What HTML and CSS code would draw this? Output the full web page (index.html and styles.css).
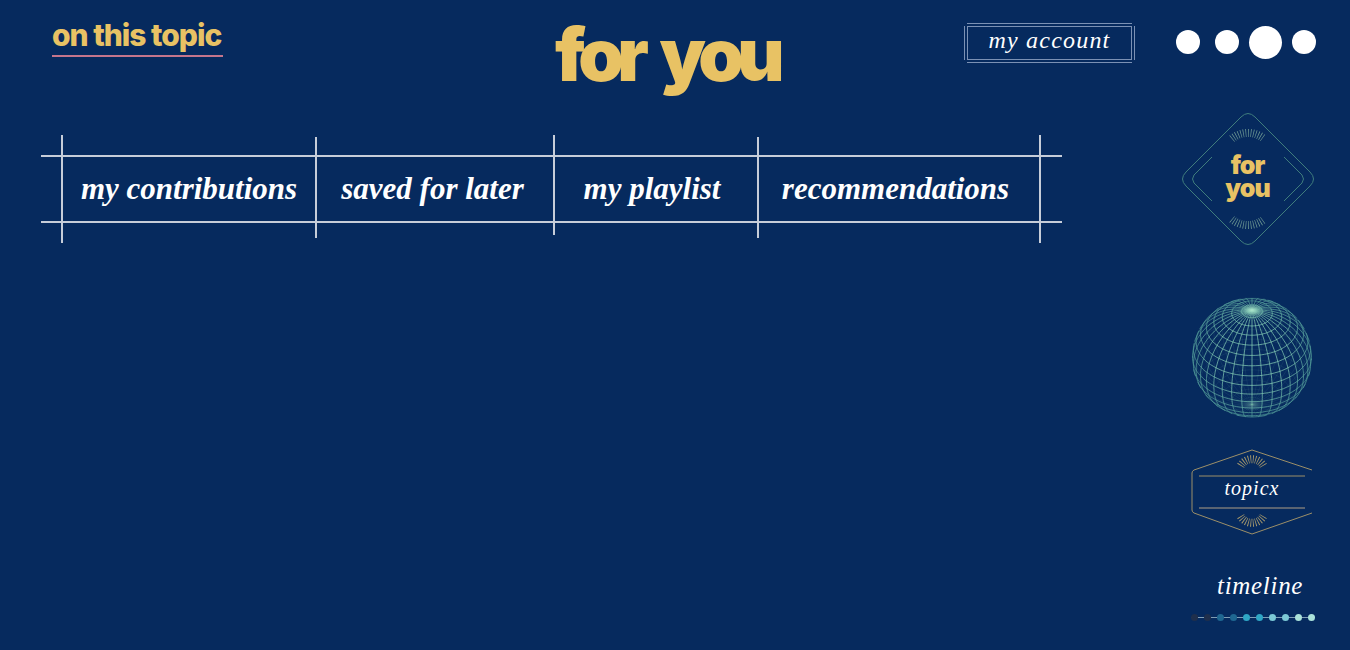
FILE: index.html
```html
<!DOCTYPE html>
<html lang="en">
  <head>
    <meta charset="UTF-8" />
    <title>for you</title>
    <link rel="stylesheet" href="styles.css">
  </head>
  <body>
    <header class="topbar">
      <h2 class="topic-title">on this topic</h2>
      <h1 class="page-title">for you</h1>
      <a href="#" class="account">my account</a>
      <div class="dots">
        <span class="dot"></span>
        <span class="dot"></span>
        <span class="dot dot-big"></span>
        <span class="dot"></span>
      </div>
    </header>

    <div class="content">
      <nav class="tabs">
        <a href="#" class="tab tab-long">my contributions</a>
        <a href="#" class="tab tab-mid">saved for later</a>
        <a href="#" class="tab tab-short">my playlist</a>
        <a href="#" class="tab tab-mid tab-last">recommendations</a>
      </nav>

      <aside class="side">
        <svg class="badge-foryou" width="132" height="132" viewBox="0 0 132 132">
          <path class="teal-line" d="M59 4 L4 59 Q-3 66 4 73 L59 128 Q66 135 73 128 L128 73 Q135 66 128 59 L73 4 Q66 -3 59 4 Z" />
          <path class="teal-line" d="M30 44 L12 62 Q9 66 12 70 L30 88 M102 44 L120 62 Q123 66 120 70 L102 88" />
          <path class="teal-rays" d="M49.9 25.8 A25 25 0 0 1 82.1 25.8" />
          <path class="teal-rays" d="M49.9 106.2 A25 25 0 0 0 82.1 106.2" />
          <text class="badge-word" x="65.5" y="61">for</text>
          <text class="badge-word" x="65.5" y="84">you</text>
        </svg>

        <svg id="globe" class="globe" width="120" height="122" viewBox="0 0 120 122"></svg>

        <svg class="badge-topic" width="122" height="86" viewBox="0 0 122 86">
          <path class="gold-line" d="M61 1 L3 21 Q1 22 1 24 L1 61 Q1 63 3 64 L61 85 L121 64 M121 21 L61 1" />
          <path class="gold-line" d="M8 27 H114" />
          <path class="grey-line" d="M8 59 H114" />
          <path class="gold-rays" d="M49.7 16.7 A13 13 0 0 1 72.3 16.7" />
          <path class="gold-rays" d="M49.7 67.3 A13 13 0 0 0 72.3 67.3" />
          <text class="badge-label" x="61" y="46">topicx</text>
        </svg>

        <div class="timeline">
          <div class="timeline-label">timeline</div>
          <div class="timeline-dots">
            <span class="tl-dot tl-1"></span>
            <span class="tl-dot tl-1"></span>
            <span class="tl-dot tl-2"></span>
            <span class="tl-dot tl-2"></span>
            <span class="tl-dot tl-3"></span>
            <span class="tl-dot tl-3"></span>
            <span class="tl-dot tl-4"></span>
            <span class="tl-dot tl-4"></span>
            <span class="tl-dot tl-5"></span>
            <span class="tl-dot tl-5"></span>
          </div>
        </div>
      </aside>
    </div>

    <script src="globe.js"></script>
  </body>
</html>
```

FILE: styles.css
```css
body {
  margin: 0;
  height: 650px;
  overflow: hidden;
  background-color: #062a5e;
  color: #fff;
  font-family: "Liberation Serif", serif;
}

.topbar {
  display: flex;
  height: 100px;
}

.topic-title {
  position: relative;
  box-sizing: border-box;
  width: 171px;
  height: 57px;
  margin: 0 0 0 52px;
  padding-top: 16px;
  border-bottom: 2px solid #c4758c;
  font-family: Inter, sans-serif;
  font-size: 30px;
  font-weight: 800;
  line-height: 38px;
  letter-spacing: -1px;
  white-space: nowrap;
  color: #e8c264;
}

.page-title {
  width: 226px;
  margin: 0 0 0 332px;
  padding-top: 12px;
  font-family: Inter, sans-serif;
  font-size: 73px;
  font-weight: 900;
  line-height: 86px;
  letter-spacing: -6.5px;
  word-spacing: 9px;
  white-space: nowrap;
  color: #e8c264;
}

.account {
  position: relative;
  box-sizing: border-box;
  width: 171px;
  height: 40px;
  margin: 23px 0 0 183px;
  font-size: 24px;
  font-style: italic;
  line-height: 35px;
  letter-spacing: 1.2px;
  text-align: center;
  text-decoration: none;
  color: #fff;
}

.account::before {
  content: "";
  position: absolute;
  top: 0;
  bottom: 0;
  left: 3px;
  right: 3px;
  border-top: 4px double #7b91b4;
  border-bottom: 4px double #7b91b4;
}

.account::after {
  content: "";
  position: absolute;
  top: 3px;
  bottom: 3px;
  left: 0;
  right: 0;
  border-left: 4px double #7b91b4;
  border-right: 4px double #7b91b4;
}

.dots {
  display: flex;
  align-items: center;
  gap: 10px;
  height: 34px;
  margin: 25px 0 0 41px;
}

.dot {
  width: 24px;
  height: 24px;
  margin-right: 5px;
  border-radius: 50%;
  background-color: #fff;
}

.dot-big {
  width: 33px;
  height: 33px;
  margin-left: -5px;
  margin-right: 0;
}

.content {
  display: flex;
}

.tabs {
  display: flex;
  box-sizing: border-box;
  width: 1021px;
  height: 68px;
  margin: 55px 0 0 41px;
  padding: 0 20px;
  border-top: 2px solid #c6cdd9;
  border-bottom: 2px solid #c6cdd9;
}

.tab {
  position: relative;
  display: flex;
  box-sizing: border-box;
  align-items: center;
  justify-content: center;
  font-size: 31px;
  font-weight: bold;
  font-style: italic;
  text-decoration: none;
  color: #fff;
}

.tab::before {
  content: "";
  position: absolute;
  left: 0;
  width: 2px;
  background-color: #c6cdd9;
}

.tab-long {
  width: 254px;
  padding-left: 2px;
}

.tab-long::before {
  top: -22px;
  bottom: -22px;
}

.tab-mid {
  width: 238px;
  padding-right: 3px;
}

.tab-mid::before {
  top: -20px;
  bottom: -17px;
}

.tab-short {
  width: 204px;
  padding-right: 6px;
}

.tab-short::before {
  top: -22px;
  bottom: -14px;
}

.tab-last {
  width: 284px;
  padding-right: 7px;
}

.tab-last::after {
  content: "";
  position: absolute;
  right: 0;
  top: -22px;
  bottom: -22px;
  width: 2px;
  background-color: #c6cdd9;
}

.side {
  display: flex;
  flex-direction: column;
  margin: 13px 0 0 120px;
}

.side svg {
  display: block;
  overflow: visible;
}

.teal-line {
  fill: none;
  stroke: #3f7d7d;
  stroke-width: 1;
}

.teal-rays {
  fill: none;
  stroke: #6f9a93;
  stroke-width: 8;
  stroke-dasharray: 0.7 1.8;
}

.gold-line {
  fill: none;
  stroke: #9c8f68;
  stroke-width: 1;
}

.gold-rays {
  fill: none;
  stroke: #a89a6c;
  stroke-width: 8;
  stroke-dasharray: 0.8 1.6;
}

.grey-line {
  fill: none;
  stroke: #5a6472;
  stroke-width: 2;
}

.badge-word {
  font-family: Inter, sans-serif;
  font-size: 25px;
  font-weight: 900;
  letter-spacing: -1px;
  text-anchor: middle;
  fill: #e8c264;
}

.globe {
  margin: 52px 0 0 10px;
}

.badge-topic {
  margin: 30px 0 0 9px;
}

.badge-label {
  font-family: "Liberation Serif", serif;
  font-size: 20px;
  font-style: italic;
  letter-spacing: 1px;
  text-anchor: middle;
  fill: #fff;
}

.timeline {
  margin: 34px 0 0 9px;
}

.timeline-label {
  padding-left: 26px;
  font-size: 25px;
  font-style: italic;
  line-height: 34px;
  letter-spacing: 0.7px;
}

.timeline-dots {
  position: relative;
  display: flex;
  justify-content: space-between;
  width: 124px;
  margin-top: 11px;
  background: linear-gradient(#7f9db5, #7f9db5) center / 100% 1px no-repeat;
}

.tl-dot {
  width: 7px;
  height: 7px;
  border-radius: 50%;
}

.tl-1 {
  background-color: #1f2f4c;
}

.tl-2 {
  background-color: #1f6791;
}

.tl-3 {
  background-color: #2fa6c5;
}

.tl-4 {
  background-color: #7cc9d6;
}

.tl-5 {
  background-color: #aae2da;
}
```

FILE: globe.js
```js
// draws the wire globe, front lines strong and back lines faint
const svg = document.getElementById("globe");
const R = 59.5;
const cx = 60;
const cy = 60.5;
const tilt = (38 * Math.PI) / 180;
const step = 10;

function project(lat, lon) {
  const a = (lat * Math.PI) / 180;
  const b = (lon * Math.PI) / 180;
  const x = Math.cos(a) * Math.sin(b);
  const y = Math.sin(a);
  const z = Math.cos(a) * Math.cos(b);
  return {
    x: cx + R * x,
    y: cy - R * (y * Math.cos(tilt) - z * Math.sin(tilt)),
    front: y * Math.sin(tilt) + z * Math.cos(tilt) >= 0,
  };
}

let front = "";
let back = "";

function addLine(points) {
  for (let i = 1; i < points.length; i++) {
    const p = points[i - 1];
    const q = points[i];
    const seg = `M${p.x.toFixed(1)} ${p.y.toFixed(1)}L${q.x.toFixed(1)} ${q.y.toFixed(1)}`;
    if (q.front) front += seg;
    else back += seg;
  }
}

for (let lon = 0; lon < 360; lon += step) {
  const points = [];
  for (let lat = -90; lat <= 90; lat += 3) points.push(project(lat, lon));
  addLine(points);
}

for (let lat = -80; lat <= 80; lat += step) {
  const points = [];
  for (let lon = 0; lon <= 360; lon += 4) points.push(project(lat, lon));
  addLine(points);
}

svg.innerHTML = `
  <defs>
    <radialGradient id="glow">
      <stop offset="0" stop-color="#b5ecd0" stop-opacity="0.9" />
      <stop offset="1" stop-color="#7fc9b0" stop-opacity="0" />
    </radialGradient>
    <radialGradient id="fade" gradientUnits="userSpaceOnUse" cx="60" cy="60" r="60">
      <stop offset="0.6" stop-color="#8ad4b8" />
      <stop offset="1" stop-color="#4f9a98" />
    </radialGradient>
  </defs>
  <path d="${back}" fill="none" stroke="#6fb9a8" stroke-width="0.5" opacity="0.2" />
  <path d="${front}" fill="none" stroke="url(#fade)" stroke-width="0.8" opacity="0.85" />
  <ellipse cx="60" cy="13" rx="12" ry="7" fill="url(#glow)" />
  <ellipse cx="60" cy="108" rx="12" ry="6" fill="url(#glow)" opacity="0.3" />
`;
```
